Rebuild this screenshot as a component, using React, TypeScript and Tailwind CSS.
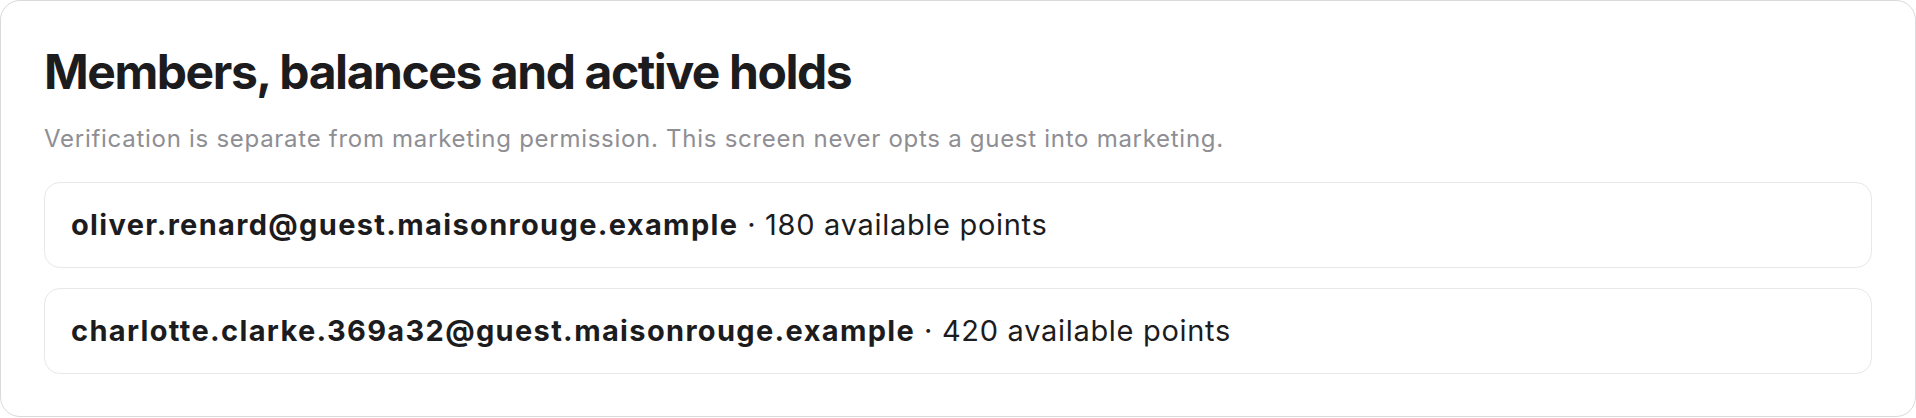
import React from 'react'

const members = [
  { email: 'oliver.renard@guest.maisonrouge.example', points: 180 },
  { email: 'charlotte.clarke.369a32@guest.maisonrouge.example', points: 420 },
]

export default function App() {
  return (
    <div className="w-full min-h-screen bg-white" style={{ fontFamily: 'Inter, "Noto Sans", sans-serif' }}>
      <section className="border border-[#d9d9de] rounded-[20px] bg-white px-[43px] pt-[42px] pb-[42px]">
        <h1 className="text-[48px] leading-[1.2] font-bold tracking-[-0.03em] text-[#1c1c1e]">
          Members, balances and active holds
        </h1>
        <p className="mt-[23px] text-[24px] leading-[30px] tracking-[0.03em] text-[#8e8e93]">
          Verification is separate from marketing permission. This screen never opts a guest into marketing.
        </p>
        <ul className="mt-[28px] flex flex-col gap-[20px]">
          {members.map(m => (
            <li key={m.email} className="border border-[#e8e8ec] rounded-[16px] px-[26px] py-[24px] text-[29px] leading-[36px] tracking-[0.024em] text-[#1c1c1e]">
              <strong className="font-bold tracking-[0.046em]">{m.email}</strong> · {m.points} available points
            </li>
          ))}
        </ul>
      </section>
    </div>
  )
}
